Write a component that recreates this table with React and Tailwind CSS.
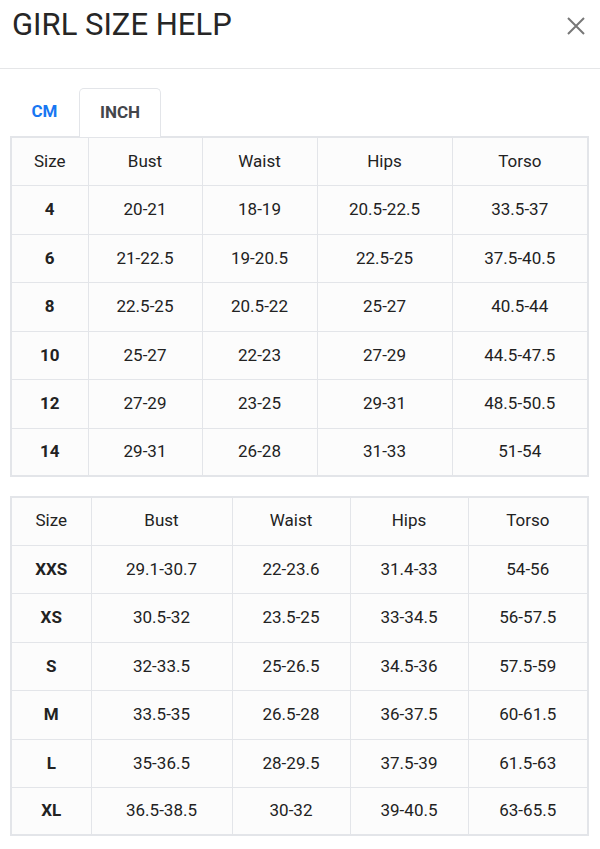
import React from 'react';

const girlsA = {
    cols: [77, 114, 115, 135, 136],
    rows: [
        ['4', '20-21', '18-19', '20.5-22.5', '33.5-37'],
        ['6', '21-22.5', '19-20.5', '22.5-25', '37.5-40.5'],
        ['8', '22.5-25', '20.5-22', '25-27', '40.5-44'],
        ['10', '25-27', '22-23', '27-29', '44.5-47.5'],
        ['12', '27-29', '23-25', '29-31', '48.5-50.5'],
        ['14', '29-31', '26-28', '31-33', '51-54'],
    ],
};

const girlsB = {
    cols: [80, 141, 118, 118, 120],
    rows: [
        ['XXS', '29.1-30.7', '22-23.6', '31.4-33', '54-56'],
        ['XS', '30.5-32', '23.5-25', '33-34.5', '56-57.5'],
        ['S', '32-33.5', '25-26.5', '34.5-36', '57.5-59'],
        ['M', '33.5-35', '26.5-28', '36-37.5', '60-61.5'],
        ['L', '35-36.5', '28-29.5', '37.5-39', '61.5-63'],
        ['XL', '36.5-38.5', '30-32', '39-40.5', '63-65.5'],
    ],
};

const headers = ['Size', 'Bust', 'Waist', 'Hips', 'Torso'];

const SizeTable = ({ data }) => (
    <table className="w-[577px] table-fixed border-collapse border-2 border-[#e3e5e9] bg-[#fcfcfc] text-[17px] text-[#222]">
        <colgroup>
            {data.cols.map((w, i) => (
                <col key={i} style={{ width: w }} />
            ))}
        </colgroup>
        <thead>
            <tr className="h-[48.5px]">
                {headers.map((h) => (
                    <th key={h} className="border border-[#e3e5e9] font-normal text-center align-middle">
                        {h}
                    </th>
                ))}
            </tr>
        </thead>
        <tbody>
            {data.rows.map((row, r) => (
                <tr key={row[0]} className={r === data.rows.length - 1 ? 'h-[47.5px]' : 'h-[48.5px]'}>
                    {row.map((cell, i) => (
                        <td
                            key={i}
                            className={`border border-[#e3e5e9] text-center align-middle ${i === 0 ? 'font-bold' : ''}`}
                        >
                            {cell}
                        </td>
                    ))}
                </tr>
            ))}
        </tbody>
    </table>
);

export default function App() {
    return (
        <div className="w-[600px] h-[849px] bg-white overflow-hidden" style={{ fontFamily: 'Roboto, "Liberation Sans", sans-serif' }}>
            {/* Header */}
            <div className="h-[69px] flex items-start justify-between pl-[12px] pr-[12px] border-b border-[#e5e6e8]">
                <h1 className="text-[31px] leading-none text-[#262626] mt-[9px]">GIRL SIZE HELP</h1>
                <button className="mt-[16px] mr-[2px] w-[20px] h-[20px] flex items-center justify-center">
                    <svg width="20" height="20" viewBox="0 0 20 20" fill="none" stroke="#777" strokeWidth="2">
                        <path d="M2 2 L18 18 M18 2 L2 18" />
                    </svg>
                </button>
            </div>

            {/* Tabs */}
            <div className="pl-[10px] pt-[18px]">
                <div className="flex items-end h-[49px]">
                    <div className="w-[69px] h-[48px] flex items-center justify-center text-[17px] font-bold text-[#1877f2]">
                        CM
                    </div>
                    <div className="w-[82px] h-[49px] flex items-center justify-center text-[17px] font-bold text-[#43464b] border border-b-0 border-[#e3e5e9] rounded-t-[5px] bg-white relative top-[1px]">
                        INCH
                    </div>
                </div>
                <SizeTable data={girlsA} />
                <div className="h-[19px]" />
                <SizeTable data={girlsB} />
            </div>
        </div>
    );
}
